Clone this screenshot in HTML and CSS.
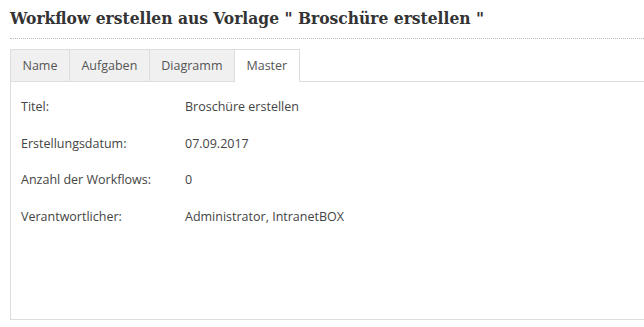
FILE: index.html
```html
<!DOCTYPE html>
<html lang="de">
<head>
<meta charset="utf-8">
<title>Workflow erstellen</title>
<link rel="stylesheet" href="styles.css">
</head>
<body>
<div class="page">
  <h1 class="title">Workflow erstellen aus Vorlage " Broschüre erstellen "</h1>
  <div class="tabs">
    <div class="tab">Name</div>
    <div class="tab">Aufgaben</div>
    <div class="tab">Diagramm</div>
    <div class="tab active">Master</div>
  </div>
  <div class="panel">
    <div class="row"><span class="label">Titel:</span><span class="value">Broschüre erstellen</span></div>
    <div class="row"><span class="label">Erstellungsdatum:</span><span class="value">07.09.2017</span></div>
    <div class="row"><span class="label">Anzahl der Workflows:</span><span class="value">0</span></div>
    <div class="row"><span class="label">Verantwortlicher:</span><span class="value">Administrator, IntranetBOX</span></div>
  </div>
</div>
</body>
</html>
```
FILE: styles.css
```css
html, body {
  margin: 0;
  padding: 0;
  background: #fff;
}
.page {
  padding-left: 10px;
  font-family: "Open Sans", "Liberation Sans", sans-serif;
  color: #444;
}
.title {
  margin: 0;
  padding: 6px 0 8px;
  font-family: "DejaVu Serif", serif;
  font-stretch: condensed;
  font-weight: bold;
  font-size: 17.25px;
  line-height: 24px;
  color: #333;
  border-bottom: 1px dotted #bbb;
}
.tabs {
  margin-top: 10px;
  display: flex;
  border-bottom: 1px solid #ddd;
  font-size: 12.5px;
}
.tab {
  height: 31px;
  line-height: 31px;
  padding: 0 11.5px;
  background: #f0f0f0;
  color: #555;
  border-top: 1px solid #ddd;
  border-right: 1px solid #ddd;
  margin-bottom: -1px;
  border-bottom: 1px solid #ddd;
}
.tab:first-child {
  border-left: 1px solid #ddd;
}
.tab.active {
  background: #fff;
  border-bottom-color: #fff;
}
.panel {
  height: 231px;
  padding-top: 6px;
  border-left: 1px solid #ddd;
  border-bottom: 1px solid #ddd;
  font-size: 12.5px;
}
.row {
  display: flex;
  height: 36.7px;
  align-items: center;
  padding-left: 10px;
}
.label {
  width: 164px;
}
```
